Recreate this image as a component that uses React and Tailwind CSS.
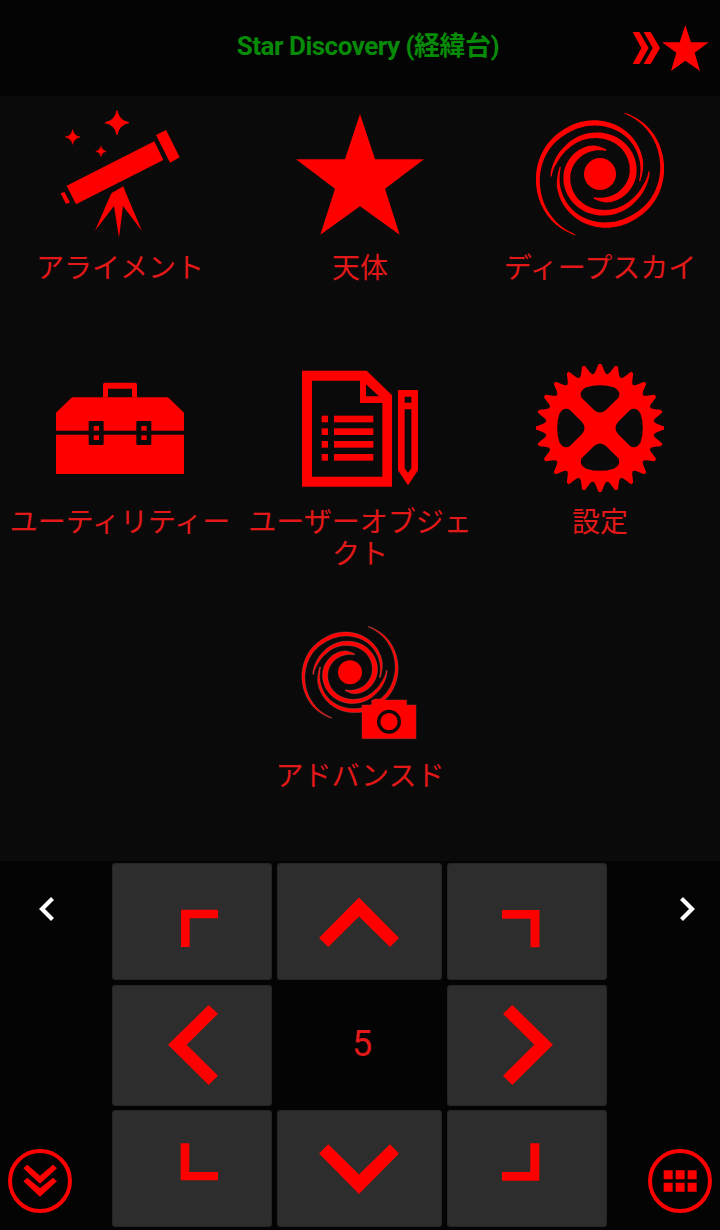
import React from 'react';

const RED = '#ff0000';
const PANEL = '#0a0a0a';

// Builds a tapered spiral arm from [angle, radius, width] stops around 0,0
const spiralArm = (stops) => {
  const outer = [];
  const inner = [];
  for (let i = 0; i < stops.length - 1; i++) {
    const p0 = stops[Math.max(i - 1, 0)];
    const p1 = stops[i];
    const p2 = stops[i + 1];
    const p3 = stops[Math.min(i + 2, stops.length - 1)];
    for (let s = 0; s <= 12; s++) {
      const t = s / 12;
      const mix = (k) =>
        0.5 * (2 * p1[k] + (p2[k] - p0[k]) * t + (2 * p0[k] - 5 * p1[k] + 4 * p2[k] - p3[k]) * t * t + (3 * p1[k] - p0[k] - 3 * p2[k] + p3[k]) * t * t * t);
      const a = ((p1[0] + (p2[0] - p1[0]) * t) * Math.PI) / 180;
      const r = mix(1);
      const w = Math.max(mix(2), 1) / 2;
      outer.push(`${(Math.cos(a) * (r + w)).toFixed(1)},${(-Math.sin(a) * (r + w)).toFixed(1)}`);
      inner.unshift(`${(Math.cos(a) * (r - w)).toFixed(1)},${(-Math.sin(a) * (r - w)).toFixed(1)}`);
    }
  }
  return [...outer, ...inner].join(' ');
};

const innerArm = spiralArm([[76, 74, 5], [104, 80, 16], [135, 87, 20], [181, 99, 21], [230, 109, 19], [277, 117, 17], [322, 128, 13], [343, 137, 10], [363, 147, 4]]);
const outerArm = spiralArm([[68, 197, 3], [42, 197, 8], [4, 187, 12], [-26, 176, 14], [-52, 164, 16], [-84, 154, 16], [-123, 143, 13], [-163, 130, 10], [-190, 121, 4]]);

const gearTeeth = Array.from({ length: 24 }, (_, i) => {
  const at = (deg, r) => {
    const a = ((i * 15 + deg - 90) * Math.PI) / 180;
    return `${(240 + Math.cos(a) * r).toFixed(1)} ${(234 + Math.sin(a) * r).toFixed(1)}`;
  };
  return `${i ? 'L' : 'M'}${at(-1.3, 192)}L${at(1.3, 192)}L${at(3.8, 175)}Q${at(5.6, 163)} ${at(7.5, 163)}Q${at(9.4, 163)} ${at(11.2, 175)}`;
}).join('') + 'Z';

const Galaxy = ({ stroke = 'none' }) => (
  <g fill={RED} stroke={stroke} strokeWidth="2" strokeOpacity="0.6">
    <circle r="48" stroke="none" />
    <polygon points={innerArm} />
    <polygon points={innerArm} transform="rotate(180)" />
    <polygon points={outerArm} />
    <polygon points={outerArm} transform="rotate(180)" />
  </g>
);

const Sparkle = ({ x, y, r }) => (
  <path transform={`translate(${x} ${y}) scale(${r})`} d="M0-1Q.16-.16 1 0Q.16.16 0 1Q-.16.16-1 0Q-.16-.16 0-1Z" stroke={RED} strokeWidth=".08" />
);

const TelescopeIcon = () => (
  <svg viewBox="48 30 384 384" className="size-32" fill={RED}>
    <Sparkle x={231} y={68} r={36} />
    <Sparkle x={98} y={111} r={22} />
    <Sparkle x={183} y={154} r={16} />
    <path d="M80 257L343 124L370 180L108 313ZM348 105L378 90L419 172L390 188ZM62 280L73 276L90 307L78 312Z" />
    <path d="M214 280L250 259L258 280L306 393L249 318L237 413L222 318L165 392Z" />
  </svg>
);

const StarIcon = () => (
  <svg viewBox="48 30 384 384" className="size-32" fill={RED}>
    <path d="M240 42L285 178H432L315 266L359 404L240 319L121 404L165 266L48 178H195Z" />
  </svg>
);

const GalaxyIcon = () => (
  <svg viewBox="-192 -192 384 384" className="size-32">
    <Galaxy />
  </svg>
);

const ToolboxIcon = () => (
  <svg viewBox="168 12 384 384" className="size-32" fill={RED}>
    <path d="M309 112V74Q309 68 315 68H405Q411 68 411 74V112H396V86H324V112Z" />
    <path d="M216 112H504L552 158V342H168V158Z" />
    <path d="M168 218H552" stroke={PANEL} strokeWidth="12" />
    {[266, 409].map((x) => (
      <g key={x}>
        <rect x={x} y="183" width="45" height="72" rx="4" fill={PANEL} />
        <rect x={x + 15} y="198" width="16" height="14" />
        <rect x={x + 15} y="226" width="16" height="14" />
      </g>
    ))}
  </svg>
);

const DocumentIcon = () => (
  <svg viewBox="168 12 384 384" className="size-32" fill={RED} fillRule="evenodd">
    <path d="M186 32H380L456 106V380H186ZM216 62V350H427V129H360V62ZM378 73V109H417Z" />
    {[167, 205, 243, 282].map((y) => (
      <g key={y}>
        <rect x="245" y={y} width="19" height="20" />
        <rect x="282" y={y} width="118" height="20" />
      </g>
    ))}
    <path d="M474 90H534V331L504 376L474 331ZM494 110V128H514V110ZM494 148V325L504 338L514 325V148Z" />
  </svg>
);

const GearIcon = () => (
  <svg viewBox="48 42 384 384" className="size-32" fill={RED}>
    <path d={gearTeeth} />
    {[0, 90, 180, 270].map((deg) => (
      <path
        key={deg}
        transform={`rotate(${deg} 240 234)`}
        fill={PANEL}
        d="M198 112Q240 99 282 112Q305 124 295 143L258 180Q240 195 222 180L185 143Q175 124 198 112Z"
      />
    ))}
  </svg>
);

const GalaxyCameraIcon = () => (
  <svg viewBox="108 24 384 384" className="size-32" fill={RED}>
    <g transform="translate(270 187) scale(.75)">
      <Galaxy stroke="#b08080" />
    </g>
    <path d="M306 285H335V270H342V267H374V270H440V285H468V386H306Z" stroke="#a03030" strokeWidth="1.5" />
    <circle cx="387" cy="335" r="31" fill={RED} stroke={PANEL} strokeWidth="10" />
  </svg>
);

const menuItems = [
  { icon: TelescopeIcon, label: 'アライメント' },
  { icon: StarIcon, label: '天体' },
  { icon: GalaxyIcon, label: 'ディープスカイ' },
  { icon: ToolboxIcon, label: 'ユーティリティー' },
  { icon: DocumentIcon, label: 'ユーザーオブジェクト' },
  { icon: GearIcon, label: '設定' },
  { icon: GalaxyCameraIcon, label: 'アドバンスド' },
];

const padKeys = [
  { name: 'up-left', box: '112 863 160 117', d: 'M181 909.7H218V918.3H189.7V947H181Z' },
  { name: 'up', box: '277 863 165 117', d: 'M359 897.5L399 938L390 947L359 916.5L328.3 947L319 938Z' },
  { name: 'up-right', box: '447 863 160 117', d: 'M502 910H539.5V947.2H530.5V918.7H502Z' },
  { name: 'left', box: '112 985 160 121', d: 'M168 1044.7L208.7 1005L218 1013.7L186.7 1044.7L218 1075.7L208.7 1085Z' },
  { name: 'rate' },
  { name: 'right', box: '447 985 160 121', d: 'M553 1044.7L512.3 1005L503 1013.7L534.3 1044.7L503 1075.7L512.3 1085Z' },
  { name: 'down-left', box: '112 1110 160 117', d: 'M180.7 1143.3H189.3V1172H218V1180.3H180.7Z' },
  { name: 'down', box: '277 1110 165 117', d: 'M359 1194L319 1153.5L328.3 1144.3L359 1174.5L390 1144.3L399 1153.5Z' },
  { name: 'down-right', box: '447 1110 160 117', d: 'M530.3 1143.3H539.3V1180.7H502V1172H530.3Z' },
];

const MenuItem = ({ icon: Icon, label }) => (
  <button className="flex h-[254px] w-60 flex-col items-center px-2">
    <Icon />
    <span className="mt-[15px] w-full text-center text-[28px] leading-8 break-all text-[#e31818]">{label}</span>
  </button>
);

export default function App() {
  return (
    <div className="flex h-[1230px] w-[720px] flex-col overflow-hidden bg-[#040404] font-['Roboto','Noto_Sans_CJK_JP',sans-serif]">
      {/* Header */}
      <header className="flex h-24 shrink-0 items-center justify-between bg-[#040404] pr-2.5">
        <div className="w-[88px]" />
        <h1 className="pb-1 pl-4 text-[26px] leading-8 font-bold tracking-[-0.5px] whitespace-nowrap text-[#078a07]">Star Discovery (経緯台)</h1>
        <svg viewBox="1236 72 234 144" className="h-12 w-[78px]" fill={RED}>
          <path d="M1238 96H1258L1286 144L1258 192H1238L1264 144ZM1271 96H1292L1320 144L1292 192H1271L1298 144Z" />
          <path d="M1396 75L1413 127H1466L1424 158L1440 213L1396 182L1353 213L1369 158L1326 127H1379Z" />
        </svg>
      </header>

      {/* Menu */}
      <main className="flex h-[765px] shrink-0 flex-wrap content-start justify-center overflow-hidden bg-[#0a0a0a] pt-3.5">
        {menuItems.map((item) => (
          <MenuItem key={item.label} {...item} />
        ))}
      </main>

      {/* Direction pad */}
      <footer className="flex flex-1">
        <div className="flex w-28 flex-col justify-between pt-9 pb-[17px] pl-2">
          <svg viewBox="8 897 64 24" className="h-6 w-16" fill="none" stroke="#fff" strokeWidth="4.2">
            <path d="M52.5 898.5L42 909L52.5 919.5" />
          </svg>
          <svg viewBox="24 162 192 192" className="size-16" fill={RED}>
            <circle cx="120" cy="258" r="90" fill="none" stroke={RED} strokeWidth="12" />
            <path d="M70 220L82 209L120 242L159 209L171 220L120 266ZM70 259L82 248L120 280L159 248L171 259L120 305Z" />
          </svg>
        </div>
        <div className="grid grid-cols-[160px_165px_160px] grid-rows-[122px_125px_117px] gap-x-[5px] pt-0.5">
          {padKeys.map((key) =>
            key.d ? (
              <button key={key.name} className="self-start overflow-hidden rounded-[4px] bg-[#2d2d2d] inset-ring inset-ring-[#252525]">
                <svg viewBox={key.box} className={key.box.endsWith('121') ? 'h-[121px] w-full' : 'h-[117px] w-full'} fill={RED}>
                  <path d={key.d} />
                </svg>
              </button>
            ) : (
              <div key={key.name} className="flex items-center justify-center pb-2 pl-[5px] text-[36px] text-[#e31818]">5</div>
            )
          )}
        </div>
        <div className="flex flex-1 flex-col items-end justify-between pt-9 pr-2 pb-[17px]">
          <svg viewBox="648 897 64 24" className="h-6 w-16" fill="none" stroke="#fff" strokeWidth="4.2">
            <path d="M681.5 898.5L692 909L681.5 919.5" />
          </svg>
          <svg viewBox="864 162 192 192" className="size-16" fill={RED}>
            <circle cx="960" cy="258" r="90" fill="none" stroke={RED} strokeWidth="12" />
            {[911, 947, 983].map((x) => (
              <path key={x} d={`M${x} 226h27v27h-27ZM${x} 263h27v27h-27Z`} />
            ))}
          </svg>
        </div>
      </footer>
    </div>
  );
}
